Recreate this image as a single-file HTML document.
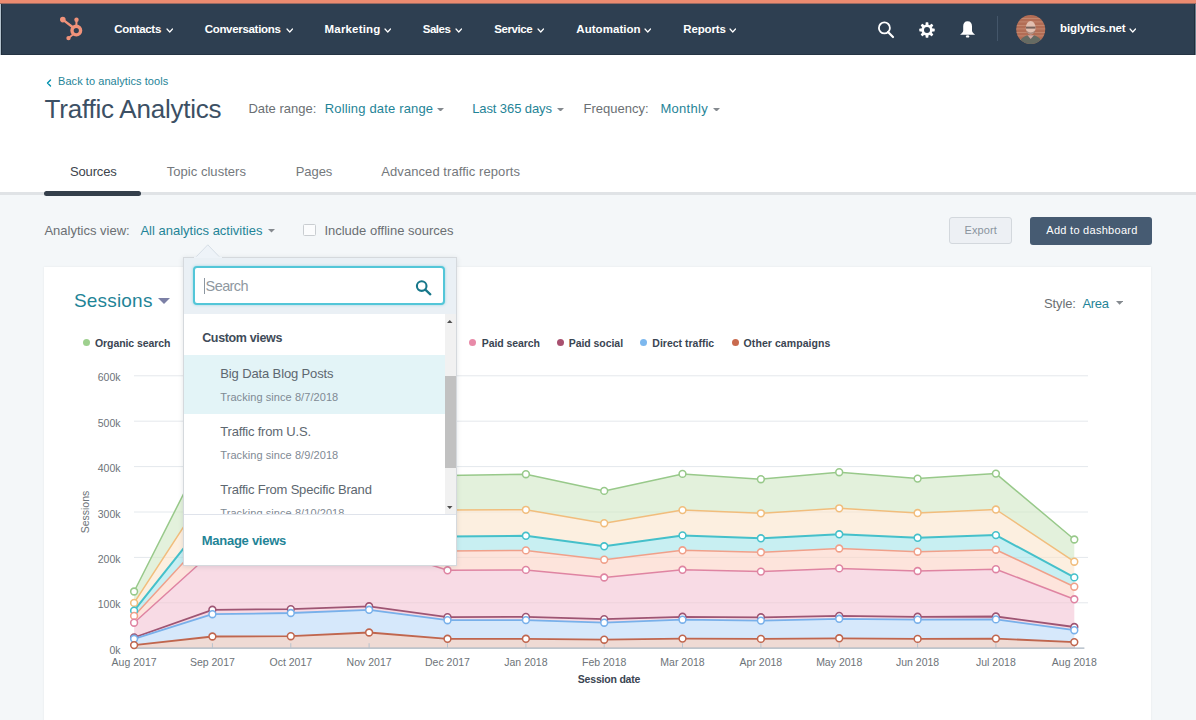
<!DOCTYPE html>
<html><head><meta charset="utf-8"><style>
html,body{margin:0;padding:0;width:1196px;height:720px;overflow:hidden;background:#fff;font-family:"Liberation Sans", sans-serif;}
.t{position:absolute;white-space:nowrap;}
</style></head><body>
<div class="t" style="left:0px;top:0px;width:1196px;height:3px;background:#ec8b70"></div>
<div class="t" style="left:0px;top:3px;width:1196px;height:1px;background:#9c6a62"></div>
<div class="t" style="left:0px;top:4px;width:1196px;height:50px;background:#2e3f51"></div>
<div class="t" style="left:0px;top:54px;width:1196px;height:1px;background:#253444"></div>
<div class="t" style="left:0px;top:4px;width:1px;height:51px;background:#b4c2cd"></div>
<div class="t" style="left:1px;top:4px;width:1px;height:51px;background:#1f2d3b"></div>
<div class="t" style="left:1195px;top:4px;width:1px;height:51px;background:#6f808e"></div>
<div class="t" style="left:1194px;top:4px;width:1px;height:51px;background:#1f2d3b"></div>
<svg class="t" style="left:55px;top:12px" width="35" height="33" viewBox="0 0 35 33">
<g stroke="#f0927a" stroke-linecap="round" fill="none">
<line x1="7.8" y1="7.6" x2="17.5" y2="15" stroke-width="2.4"/><line x1="21.5" y1="7.6" x2="21.4" y2="13" stroke-width="2"/><line x1="18" y1="22.5" x2="13.5" y2="26.1" stroke-width="1.8"/>
<circle cx="21.3" cy="18.6" r="4.3" stroke-width="3.4"/></g>
<circle cx="7.8" cy="7.6" r="2.8" fill="#f0927a"/><circle cx="21.5" cy="7.8" r="2.2" fill="#f0927a"/><circle cx="13.5" cy="26.1" r="2.2" fill="#f0927a"/>
</svg>
<div class="t" style="left:114.2px;top:23.67px;font-size:11.5px;line-height:11.5px;color:#fff;font-weight:bold;letter-spacing:-0.3px">Contacts</div>
<svg class="t" style="left:165.7px;top:27.5px" width="7.5" height="5" viewBox="0 0 7.5 5"><polyline points="1,1 3.75,4 6.5,1" fill="none" stroke="#fff" stroke-width="1.2" stroke-linecap="round" stroke-linejoin="round"/></svg>
<div class="t" style="left:204.7px;top:23.67px;font-size:11.5px;line-height:11.5px;color:#fff;font-weight:bold;letter-spacing:-0.31px">Conversations</div>
<svg class="t" style="left:285.6px;top:27.5px" width="7.5" height="5" viewBox="0 0 7.5 5"><polyline points="1,1 3.75,4 6.5,1" fill="none" stroke="#fff" stroke-width="1.2" stroke-linecap="round" stroke-linejoin="round"/></svg>
<div class="t" style="left:324.6px;top:23.67px;font-size:11.5px;line-height:11.5px;color:#fff;font-weight:bold;letter-spacing:0.16px">Marketing</div>
<svg class="t" style="left:383.8px;top:27.5px" width="7.5" height="5" viewBox="0 0 7.5 5"><polyline points="1,1 3.75,4 6.5,1" fill="none" stroke="#fff" stroke-width="1.2" stroke-linecap="round" stroke-linejoin="round"/></svg>
<div class="t" style="left:422.7px;top:23.67px;font-size:11.5px;line-height:11.5px;color:#fff;font-weight:bold;letter-spacing:-0.47px">Sales</div>
<svg class="t" style="left:455.4px;top:27.5px" width="7.5" height="5" viewBox="0 0 7.5 5"><polyline points="1,1 3.75,4 6.5,1" fill="none" stroke="#fff" stroke-width="1.2" stroke-linecap="round" stroke-linejoin="round"/></svg>
<div class="t" style="left:494.3px;top:23.67px;font-size:11.5px;line-height:11.5px;color:#fff;font-weight:bold;letter-spacing:-0.42px">Service</div>
<svg class="t" style="left:537.4px;top:27.5px" width="7.5" height="5" viewBox="0 0 7.5 5"><polyline points="1,1 3.75,4 6.5,1" fill="none" stroke="#fff" stroke-width="1.2" stroke-linecap="round" stroke-linejoin="round"/></svg>
<div class="t" style="left:576.3px;top:23.67px;font-size:11.5px;line-height:11.5px;color:#fff;font-weight:bold;letter-spacing:0.05px">Automation</div>
<svg class="t" style="left:644.4px;top:27.5px" width="7.5" height="5" viewBox="0 0 7.5 5"><polyline points="1,1 3.75,4 6.5,1" fill="none" stroke="#fff" stroke-width="1.2" stroke-linecap="round" stroke-linejoin="round"/></svg>
<div class="t" style="left:683.3px;top:23.67px;font-size:11.5px;line-height:11.5px;color:#fff;font-weight:bold;letter-spacing:-0.15px">Reports</div>
<svg class="t" style="left:729px;top:27.5px" width="7.5" height="5" viewBox="0 0 7.5 5"><polyline points="1,1 3.75,4 6.5,1" fill="none" stroke="#fff" stroke-width="1.2" stroke-linecap="round" stroke-linejoin="round"/></svg>
<svg class="t" style="left:876px;top:20px" width="20" height="20" viewBox="0 0 20 20"><circle cx="8.4" cy="7.9" r="5.5" fill="none" stroke="#fff" stroke-width="1.8"/><line x1="12" y1="12" x2="17" y2="17" stroke="#fff" stroke-width="2.2" stroke-linecap="round"/></svg>
<svg class="t" style="left:916.8px;top:19.5px" width="20" height="20" viewBox="-10 -10 20 20"><g fill="#fff"><rect x="-1.4" y="-7.7" width="2.8" height="4" rx="0.6" transform="rotate(0)"/><rect x="-1.4" y="-7.7" width="2.8" height="4" rx="0.6" transform="rotate(45)"/><rect x="-1.4" y="-7.7" width="2.8" height="4" rx="0.6" transform="rotate(90)"/><rect x="-1.4" y="-7.7" width="2.8" height="4" rx="0.6" transform="rotate(135)"/><rect x="-1.4" y="-7.7" width="2.8" height="4" rx="0.6" transform="rotate(180)"/><rect x="-1.4" y="-7.7" width="2.8" height="4" rx="0.6" transform="rotate(225)"/><rect x="-1.4" y="-7.7" width="2.8" height="4" rx="0.6" transform="rotate(270)"/><rect x="-1.4" y="-7.7" width="2.8" height="4" rx="0.6" transform="rotate(315)"/><circle r="5.6"/></g><circle r="3" fill="#2e3f51"/></svg>
<svg class="t" style="left:959px;top:20px" width="17" height="20" viewBox="0 0 17 20"><path d="M8.6 1.3 C5.6 1.3 4.2 3.3 4.2 6.3 L4.2 10.8 C4.2 12.4 2.6 13.3 1.1 14.8 L16.1 14.8 C14.6 13.3 13 12.4 13 10.8 L13 6.3 C13 3.3 11.6 1.3 8.6 1.3 Z" fill="#fff"/><ellipse cx="8.6" cy="16.4" rx="1.7" ry="1.2" fill="#fff"/></svg>
<div class="t" style="left:997px;top:16px;width:1px;height:25px;background:#44566a"></div>
<svg class="t" style="left:1016px;top:14.5px" width="30" height="30" viewBox="0 0 30 30"><defs><clipPath id="av"><circle cx="14.7" cy="14.5" r="14.5"/></clipPath></defs>
<g clip-path="url(#av)"><rect width="30" height="30" fill="#b26d55"/><rect x="0" y="3" width="30" height="0.8" fill="#d09a80" opacity="0.7"/><rect x="0" y="6.5" width="30" height="0.8" fill="#d09a80" opacity="0.7"/><rect x="0" y="10" width="30" height="0.8" fill="#d09a80" opacity="0.7"/><rect x="0" y="13.5" width="30" height="0.8" fill="#d09a80" opacity="0.7"/><rect x="0" y="17" width="30" height="0.8" fill="#d09a80" opacity="0.7"/><rect x="0" y="20.5" width="30" height="0.8" fill="#d09a80" opacity="0.7"/><rect x="0" y="24" width="30" height="0.8" fill="#d09a80" opacity="0.7"/>
<path d="M2 30 C4 23 9 20 14.7 20 C20.5 20 25.5 23 27.5 30 Z" fill="#656b63"/><path d="M11.5 20.3 L14.7 24 L18 20.3 Z" fill="#d8a8a0"/>
<ellipse cx="14.7" cy="12.8" rx="4.9" ry="6.8" fill="#e2bfb0"/><rect x="10" y="11.6" width="9.4" height="2" fill="#4a3a38" opacity="0.7"/><path d="M10.5 15.5 Q14.7 19.5 19 15.5 L19 17.5 Q14.7 21 10.5 17.5Z" fill="#8a6a60" opacity="0.6"/></g></svg>
<div class="t" style="left:1060.0px;top:23.37px;font-size:11.5px;line-height:11.5px;color:#fff;font-weight:bold;letter-spacing:-0.12px">biglytics.net</div>
<svg class="t" style="left:1129.2px;top:27.5px" width="7.5" height="5" viewBox="0 0 7.5 5"><polyline points="1,1 3.75,4 6.5,1" fill="none" stroke="#fff" stroke-width="1.2" stroke-linecap="round" stroke-linejoin="round"/></svg>
<svg class="t" style="left:46px;top:79px" width="6" height="8" viewBox="0 0 6 8"><polyline points="4.5,1 1.5,4 4.5,7" fill="none" stroke="#0091ae" stroke-width="1.4" stroke-linecap="round" stroke-linejoin="round"/></svg>
<div class="t" style="left:58.0px;top:76.09px;font-size:11px;line-height:11px;color:#1f8497;font-weight:normal;letter-spacing:0.06px">Back to analytics tools</div>
<div class="t" style="left:44.5px;top:95.69px;font-size:26px;line-height:26px;color:#3c5064;font-weight:normal;letter-spacing:-0.22px">Traffic Analytics</div>
<div class="t" style="left:248.4px;top:102.00px;font-size:13px;line-height:13px;color:#6b6f73;font-weight:normal;">Date range:</div>
<div class="t" style="left:324.7px;top:102.00px;font-size:13px;line-height:13px;color:#1f8497;font-weight:normal;letter-spacing:0.17px">Rolling date range</div>
<svg class="t" style="left:437px;top:107.8px" width="7" height="3.6" viewBox="0 0 7 3.6"><polygon points="0,0 7,0 3.5,3.6" fill="#858a8f"/></svg>
<div class="t" style="left:472.2px;top:102.00px;font-size:13px;line-height:13px;color:#1f8497;font-weight:normal;letter-spacing:-0.1px">Last 365 days</div>
<svg class="t" style="left:557px;top:107.8px" width="7" height="3.6" viewBox="0 0 7 3.6"><polygon points="0,0 7,0 3.5,3.6" fill="#858a8f"/></svg>
<div class="t" style="left:583.5px;top:102.00px;font-size:13px;line-height:13px;color:#6b6f73;font-weight:normal;">Frequency:</div>
<div class="t" style="left:660.4px;top:102.00px;font-size:13px;line-height:13px;color:#1f8497;font-weight:normal;letter-spacing:0.3px">Monthly</div>
<svg class="t" style="left:713px;top:107.8px" width="7" height="3.6" viewBox="0 0 7 3.6"><polygon points="0,0 7,0 3.5,3.6" fill="#858a8f"/></svg>
<div class="t" style="left:70.0px;top:165.30px;font-size:13px;line-height:13px;color:#3c444c;font-weight:normal;letter-spacing:-0.15px">Sources</div>
<div class="t" style="left:166.7px;top:165.30px;font-size:13px;line-height:13px;color:#74787c;font-weight:normal;letter-spacing:0.04px">Topic clusters</div>
<div class="t" style="left:295.8px;top:165.30px;font-size:13px;line-height:13px;color:#74787c;font-weight:normal;letter-spacing:-0.1px">Pages</div>
<div class="t" style="left:381.3px;top:165.30px;font-size:13px;line-height:13px;color:#74787c;font-weight:normal;letter-spacing:0.07px">Advanced traffic reports</div>
<div class="t" style="left:0px;top:194px;width:1196px;height:526px;background:#f4f7f9"></div>
<div class="t" style="left:0px;top:192px;width:1196px;height:3px;background:#e0e3e6"></div>
<div class="t" style="left:44px;top:191px;width:97px;height:5px;background:#343f4b;border-radius:2.5px"></div>
<div class="t" style="left:44.4px;top:224.20px;font-size:13px;line-height:13px;color:#6b6f73;font-weight:normal;">Analytics view:</div>
<div class="t" style="left:140.4px;top:224.20px;font-size:13px;line-height:13px;color:#1f8497;font-weight:normal;">All analytics activities</div>
<svg class="t" style="left:267.5px;top:229px" width="7" height="3.6" viewBox="0 0 7 3.6"><polygon points="0,0 7,0 3.5,3.6" fill="#858a8f"/></svg>
<div class="t" style="left:302.8px;top:223.7px;width:12.800000000000011px;height:12.800000000000011px;background:#fbfcfd;border:1px solid #c9cdd1;border-radius:1.5px;box-sizing:border-box"></div>
<div class="t" style="left:324.4px;top:224.20px;font-size:13px;line-height:13px;color:#6b6f73;font-weight:normal;">Include offline sources</div>
<div class="t" style="left:949px;top:217px;width:63px;height:27.30000000000001px;background:#edf0f4;border:1px solid #d3d8dd;border-radius:3px;box-sizing:border-box"></div>
<div class="t" style="left:964.5px;top:224.59px;font-size:11px;line-height:11px;color:#8a949e;font-weight:normal;letter-spacing:0.12px">Export</div>
<div class="t" style="left:1030px;top:216.6px;width:122px;height:28.0px;background:#465b72;border-radius:3px"></div>
<div class="t" style="left:1046.3px;top:224.59px;font-size:11px;line-height:11px;color:#fff;font-weight:normal;letter-spacing:0.28px">Add to dashboard</div>
<div class="t" style="left:44px;top:267px;width:1107px;height:473px;background:#fff;box-shadow:0 0 2px rgba(45,62,80,0.08)"></div>
<div class="t" style="left:73.9px;top:291.12px;font-size:19px;line-height:19px;color:#1f8497;font-weight:normal;letter-spacing:0.2px">Sessions</div>
<svg class="t" style="left:158px;top:298px" width="12" height="6" viewBox="0 0 12 6"><polygon points="0,0 12,0 6.0,6" fill="#7c80a6"/></svg>
<div class="t" style="left:1044.0px;top:296.50px;font-size:13px;line-height:13px;color:#6b6f73;font-weight:normal;letter-spacing:-0.12px">Style:</div>
<div class="t" style="left:1082.5px;top:296.50px;font-size:13px;line-height:13px;color:#1f8497;font-weight:normal;letter-spacing:-0.33px">Area</div>
<svg class="t" style="left:1115.5px;top:301px" width="7.2" height="3.8" viewBox="0 0 7.2 3.8"><polygon points="0,0 7.2,0 3.6,3.8" fill="#858a8f"/></svg>
<div class="t" style="left:82.8px;top:339.3px;width:7px;height:7px;border-radius:50%;background:#9ed08e"></div>
<div class="t" style="left:95.0px;top:338.11px;font-size:10.5px;line-height:10.5px;color:#3a4552;font-weight:bold;letter-spacing:-0.08px">Organic search</div>
<div class="t" style="left:469.2px;top:339.3px;width:7px;height:7px;border-radius:50%;background:#e88aa8"></div>
<div class="t" style="left:481.8px;top:338.11px;font-size:10.5px;line-height:10.5px;color:#3a4552;font-weight:bold;letter-spacing:-0.08px">Paid search</div>
<div class="t" style="left:556.9px;top:339.3px;width:7px;height:7px;border-radius:50%;background:#a8506f"></div>
<div class="t" style="left:568.7px;top:338.11px;font-size:10.5px;line-height:10.5px;color:#3a4552;font-weight:bold;letter-spacing:-0.05px">Paid social</div>
<div class="t" style="left:639.8px;top:339.3px;width:7px;height:7px;border-radius:50%;background:#7db8ee"></div>
<div class="t" style="left:652.3px;top:338.11px;font-size:10.5px;line-height:10.5px;color:#3a4552;font-weight:bold;letter-spacing:0px">Direct traffic</div>
<div class="t" style="left:731.5px;top:339.3px;width:7px;height:7px;border-radius:50%;background:#c96a4e"></div>
<div class="t" style="left:743.6px;top:338.11px;font-size:10.5px;line-height:10.5px;color:#3a4552;font-weight:bold;letter-spacing:0.07px">Other campaigns</div>
<svg class="t" style="left:0;top:0" width="1196" height="720" viewBox="0 0 1196 720">
<line x1="134" y1="602.8" x2="1088" y2="602.8" stroke="#eef1f5" stroke-width="1"/>
<line x1="134" y1="557.4" x2="1088" y2="557.4" stroke="#eef1f5" stroke-width="1"/>
<line x1="134" y1="512.0" x2="1088" y2="512.0" stroke="#eef1f5" stroke-width="1"/>
<line x1="134" y1="466.6" x2="1088" y2="466.6" stroke="#eef1f5" stroke-width="1"/>
<line x1="134" y1="421.2" x2="1088" y2="421.2" stroke="#eef1f5" stroke-width="1"/>
<line x1="134" y1="375.8" x2="1088" y2="375.8" stroke="#eef1f5" stroke-width="1"/>
<path d="M134.1,591.5 L212.4,437.0 L290.8,440.0 L369.1,435.0 L447.5,475.5 L525.9,474.2 L604.2,490.9 L682.5,473.9 L760.9,479.2 L839.2,472.2 L917.6,478.6 L995.9,473.6 L1074.3,539.5 L1074.3,561.7 L995.9,509.5 L917.6,513.0 L839.2,508.3 L760.9,513.3 L682.5,510.1 L604.2,523.2 L525.9,509.8 L447.5,510.0 L369.1,480.0 L290.8,485.0 L212.4,482.6 L134.1,602.9 Z" fill="#e3f1dc"/>
<path d="M134.1,602.9 L212.4,482.6 L290.8,485.0 L369.1,480.0 L447.5,510.0 L525.9,509.8 L604.2,523.2 L682.5,510.1 L760.9,513.3 L839.2,508.3 L917.6,513.0 L995.9,509.5 L1074.3,561.7 L1074.3,577.4 L995.9,535.1 L917.6,537.8 L839.2,534.3 L760.9,538.3 L682.5,535.4 L604.2,546.3 L525.9,535.8 L447.5,536.5 L369.1,510.0 L290.8,514.0 L212.4,512.2 L134.1,610.7 Z" fill="#fcefe0"/>
<path d="M134.1,610.7 L212.4,512.2 L290.8,514.0 L369.1,510.0 L447.5,536.5 L525.9,535.8 L604.2,546.3 L682.5,535.4 L760.9,538.3 L839.2,534.3 L917.6,537.8 L995.9,535.1 L1074.3,577.4 L1074.3,586.7 L995.9,549.7 L917.6,551.7 L839.2,548.5 L760.9,552.3 L682.5,550.3 L604.2,559.7 L525.9,550.4 L447.5,551.0 L369.1,528.0 L290.8,533.0 L212.4,531.0 L134.1,615.9 Z" fill="#c8eff2"/>
<path d="M134.1,615.9 L212.4,531.0 L290.8,533.0 L369.1,528.0 L447.5,551.0 L525.9,550.4 L604.2,559.7 L682.5,550.3 L760.9,552.3 L839.2,548.5 L917.6,551.7 L995.9,549.7 L1074.3,586.7 L1074.3,599.3 L995.9,569.2 L917.6,571.0 L839.2,568.4 L760.9,571.6 L682.5,569.8 L604.2,577.5 L525.9,569.9 L447.5,570.3 L369.1,545.0 L290.8,550.0 L212.4,552.0 L134.1,622.7 Z" fill="#fde4dc"/>
<path d="M134.1,622.7 L212.4,552.0 L290.8,550.0 L369.1,545.0 L447.5,570.3 L525.9,569.9 L604.2,577.5 L682.5,569.8 L760.9,571.6 L839.2,568.4 L917.6,571.0 L995.9,569.2 L1074.3,599.3 L1074.3,627.0 L995.9,616.5 L917.6,616.8 L839.2,615.9 L760.9,617.3 L682.5,616.8 L604.2,619.2 L525.9,616.9 L447.5,617.1 L369.1,606.3 L290.8,609.1 L212.4,609.8 L134.1,637.5 Z" fill="#f8dbe5"/>
<path d="M134.1,637.5 L212.4,609.8 L290.8,609.1 L369.1,606.3 L447.5,617.1 L525.9,616.9 L604.2,619.2 L682.5,616.8 L760.9,617.3 L839.2,615.9 L917.6,616.8 L995.9,616.5 L1074.3,627.0 L1074.3,630.2 L995.9,619.4 L917.6,619.7 L839.2,618.8 L760.9,620.6 L682.5,619.7 L604.2,622.7 L525.9,620.1 L447.5,620.2 L369.1,609.8 L290.8,613.0 L212.4,614.2 L134.1,638.8 Z" fill="#f8dbe5"/>
<path d="M134.1,638.8 L212.4,614.2 L290.8,613.0 L369.1,609.8 L447.5,620.2 L525.9,620.1 L604.2,622.7 L682.5,619.7 L760.9,620.6 L839.2,618.8 L917.6,619.7 L995.9,619.4 L1074.3,630.2 L1074.3,642.1 L995.9,638.6 L917.6,638.9 L839.2,638.3 L760.9,638.9 L682.5,638.6 L604.2,639.7 L525.9,638.8 L447.5,638.8 L369.1,632.5 L290.8,636.2 L212.4,636.5 L134.1,645.1 Z" fill="#d6e8fb"/>
<path d="M134.1,645.1 L212.4,636.5 L290.8,636.2 L369.1,632.5 L447.5,638.8 L525.9,638.8 L604.2,639.7 L682.5,638.6 L760.9,638.9 L839.2,638.3 L917.6,638.9 L995.9,638.6 L1074.3,642.1 L1074.3,648.2 L995.9,648.2 L917.6,648.2 L839.2,648.2 L760.9,648.2 L682.5,648.2 L604.2,648.2 L525.9,648.2 L447.5,648.2 L369.1,648.2 L290.8,648.2 L212.4,648.2 L134.1,648.2 Z" fill="#efdad4"/>
<line x1="134" y1="602.8" x2="1088" y2="602.8" stroke="rgba(60,70,80,0.05)" stroke-width="1"/>
<line x1="134" y1="557.4" x2="1088" y2="557.4" stroke="rgba(60,70,80,0.05)" stroke-width="1"/>
<line x1="134" y1="512.0" x2="1088" y2="512.0" stroke="rgba(60,70,80,0.05)" stroke-width="1"/>
<line x1="134" y1="466.6" x2="1088" y2="466.6" stroke="rgba(60,70,80,0.05)" stroke-width="1"/>
<line x1="134" y1="421.2" x2="1088" y2="421.2" stroke="rgba(60,70,80,0.05)" stroke-width="1"/>
<line x1="134" y1="375.8" x2="1088" y2="375.8" stroke="rgba(60,70,80,0.05)" stroke-width="1"/>
<line x1="134" y1="648.2" x2="1084.4" y2="648.2" stroke="#a8b4c0" stroke-width="1.2"/>
<line x1="134.1" y1="643.2" x2="134.1" y2="648.2" stroke="#b8c2cc" stroke-width="1"/>
<line x1="212.4" y1="643.2" x2="212.4" y2="648.2" stroke="#b8c2cc" stroke-width="1"/>
<line x1="290.8" y1="643.2" x2="290.8" y2="648.2" stroke="#b8c2cc" stroke-width="1"/>
<line x1="369.1" y1="643.2" x2="369.1" y2="648.2" stroke="#b8c2cc" stroke-width="1"/>
<line x1="447.5" y1="643.2" x2="447.5" y2="648.2" stroke="#b8c2cc" stroke-width="1"/>
<line x1="525.9" y1="643.2" x2="525.9" y2="648.2" stroke="#b8c2cc" stroke-width="1"/>
<line x1="604.2" y1="643.2" x2="604.2" y2="648.2" stroke="#b8c2cc" stroke-width="1"/>
<line x1="682.5" y1="643.2" x2="682.5" y2="648.2" stroke="#b8c2cc" stroke-width="1"/>
<line x1="760.9" y1="643.2" x2="760.9" y2="648.2" stroke="#b8c2cc" stroke-width="1"/>
<line x1="839.2" y1="643.2" x2="839.2" y2="648.2" stroke="#b8c2cc" stroke-width="1"/>
<line x1="917.6" y1="643.2" x2="917.6" y2="648.2" stroke="#b8c2cc" stroke-width="1"/>
<line x1="995.9" y1="643.2" x2="995.9" y2="648.2" stroke="#b8c2cc" stroke-width="1"/>
<line x1="1074.3" y1="643.2" x2="1074.3" y2="648.2" stroke="#b8c2cc" stroke-width="1"/>
<polyline points="134.1,591.5 212.4,437.0 290.8,440.0 369.1,435.0 447.5,475.5 525.9,474.2 604.2,490.9 682.5,473.9 760.9,479.2 839.2,472.2 917.6,478.6 995.9,473.6 1074.3,539.5" fill="none" stroke="#98c98a" stroke-width="1.5" stroke-linejoin="round"/>
<polyline points="134.1,602.9 212.4,482.6 290.8,485.0 369.1,480.0 447.5,510.0 525.9,509.8 604.2,523.2 682.5,510.1 760.9,513.3 839.2,508.3 917.6,513.0 995.9,509.5 1074.3,561.7" fill="none" stroke="#f1bd7c" stroke-width="1.5" stroke-linejoin="round"/>
<polyline points="134.1,610.7 212.4,512.2 290.8,514.0 369.1,510.0 447.5,536.5 525.9,535.8 604.2,546.3 682.5,535.4 760.9,538.3 839.2,534.3 917.6,537.8 995.9,535.1 1074.3,577.4" fill="none" stroke="#45c0ca" stroke-width="2.0" stroke-linejoin="round"/>
<polyline points="134.1,615.9 212.4,531.0 290.8,533.0 369.1,528.0 447.5,551.0 525.9,550.4 604.2,559.7 682.5,550.3 760.9,552.3 839.2,548.5 917.6,551.7 995.9,549.7 1074.3,586.7" fill="none" stroke="#f0a08a" stroke-width="1.5" stroke-linejoin="round"/>
<polyline points="134.1,622.7 212.4,552.0 290.8,550.0 369.1,545.0 447.5,570.3 525.9,569.9 604.2,577.5 682.5,569.8 760.9,571.6 839.2,568.4 917.6,571.0 995.9,569.2 1074.3,599.3" fill="none" stroke="#df84a2" stroke-width="1.5" stroke-linejoin="round"/>
<polyline points="134.1,637.5 212.4,609.8 290.8,609.1 369.1,606.3 447.5,617.1 525.9,616.9 604.2,619.2 682.5,616.8 760.9,617.3 839.2,615.9 917.6,616.8 995.9,616.5 1074.3,627.0" fill="none" stroke="#9e5573" stroke-width="1.8" stroke-linejoin="round"/>
<polyline points="134.1,638.8 212.4,614.2 290.8,613.0 369.1,609.8 447.5,620.2 525.9,620.1 604.2,622.7 682.5,619.7 760.9,620.6 839.2,618.8 917.6,619.7 995.9,619.4 1074.3,630.2" fill="none" stroke="#78b0ea" stroke-width="1.8" stroke-linejoin="round"/>
<polyline points="134.1,645.1 212.4,636.5 290.8,636.2 369.1,632.5 447.5,638.8 525.9,638.8 604.2,639.7 682.5,638.6 760.9,638.9 839.2,638.3 917.6,638.9 995.9,638.6 1074.3,642.1" fill="none" stroke="#c0664e" stroke-width="1.8" stroke-linejoin="round"/>
<circle cx="134.1" cy="591.5" r="3.4" fill="#fff" stroke="#98c98a" stroke-width="1.55"/>
<circle cx="212.4" cy="437.0" r="3.4" fill="#fff" stroke="#98c98a" stroke-width="1.55"/>
<circle cx="290.8" cy="440.0" r="3.4" fill="#fff" stroke="#98c98a" stroke-width="1.55"/>
<circle cx="369.1" cy="435.0" r="3.4" fill="#fff" stroke="#98c98a" stroke-width="1.55"/>
<circle cx="447.5" cy="475.5" r="3.4" fill="#fff" stroke="#98c98a" stroke-width="1.55"/>
<circle cx="525.9" cy="474.2" r="3.4" fill="#fff" stroke="#98c98a" stroke-width="1.55"/>
<circle cx="604.2" cy="490.9" r="3.4" fill="#fff" stroke="#98c98a" stroke-width="1.55"/>
<circle cx="682.5" cy="473.9" r="3.4" fill="#fff" stroke="#98c98a" stroke-width="1.55"/>
<circle cx="760.9" cy="479.2" r="3.4" fill="#fff" stroke="#98c98a" stroke-width="1.55"/>
<circle cx="839.2" cy="472.2" r="3.4" fill="#fff" stroke="#98c98a" stroke-width="1.55"/>
<circle cx="917.6" cy="478.6" r="3.4" fill="#fff" stroke="#98c98a" stroke-width="1.55"/>
<circle cx="995.9" cy="473.6" r="3.4" fill="#fff" stroke="#98c98a" stroke-width="1.55"/>
<circle cx="1074.3" cy="539.5" r="3.4" fill="#fff" stroke="#98c98a" stroke-width="1.55"/>
<circle cx="134.1" cy="602.9" r="3.4" fill="#fff" stroke="#f1bd7c" stroke-width="1.55"/>
<circle cx="212.4" cy="482.6" r="3.4" fill="#fff" stroke="#f1bd7c" stroke-width="1.55"/>
<circle cx="290.8" cy="485.0" r="3.4" fill="#fff" stroke="#f1bd7c" stroke-width="1.55"/>
<circle cx="369.1" cy="480.0" r="3.4" fill="#fff" stroke="#f1bd7c" stroke-width="1.55"/>
<circle cx="447.5" cy="510.0" r="3.4" fill="#fff" stroke="#f1bd7c" stroke-width="1.55"/>
<circle cx="525.9" cy="509.8" r="3.4" fill="#fff" stroke="#f1bd7c" stroke-width="1.55"/>
<circle cx="604.2" cy="523.2" r="3.4" fill="#fff" stroke="#f1bd7c" stroke-width="1.55"/>
<circle cx="682.5" cy="510.1" r="3.4" fill="#fff" stroke="#f1bd7c" stroke-width="1.55"/>
<circle cx="760.9" cy="513.3" r="3.4" fill="#fff" stroke="#f1bd7c" stroke-width="1.55"/>
<circle cx="839.2" cy="508.3" r="3.4" fill="#fff" stroke="#f1bd7c" stroke-width="1.55"/>
<circle cx="917.6" cy="513.0" r="3.4" fill="#fff" stroke="#f1bd7c" stroke-width="1.55"/>
<circle cx="995.9" cy="509.5" r="3.4" fill="#fff" stroke="#f1bd7c" stroke-width="1.55"/>
<circle cx="1074.3" cy="561.7" r="3.4" fill="#fff" stroke="#f1bd7c" stroke-width="1.55"/>
<circle cx="134.1" cy="610.7" r="3.4" fill="#fff" stroke="#45c0ca" stroke-width="1.55"/>
<circle cx="212.4" cy="512.2" r="3.4" fill="#fff" stroke="#45c0ca" stroke-width="1.55"/>
<circle cx="290.8" cy="514.0" r="3.4" fill="#fff" stroke="#45c0ca" stroke-width="1.55"/>
<circle cx="369.1" cy="510.0" r="3.4" fill="#fff" stroke="#45c0ca" stroke-width="1.55"/>
<circle cx="447.5" cy="536.5" r="3.4" fill="#fff" stroke="#45c0ca" stroke-width="1.55"/>
<circle cx="525.9" cy="535.8" r="3.4" fill="#fff" stroke="#45c0ca" stroke-width="1.55"/>
<circle cx="604.2" cy="546.3" r="3.4" fill="#fff" stroke="#45c0ca" stroke-width="1.55"/>
<circle cx="682.5" cy="535.4" r="3.4" fill="#fff" stroke="#45c0ca" stroke-width="1.55"/>
<circle cx="760.9" cy="538.3" r="3.4" fill="#fff" stroke="#45c0ca" stroke-width="1.55"/>
<circle cx="839.2" cy="534.3" r="3.4" fill="#fff" stroke="#45c0ca" stroke-width="1.55"/>
<circle cx="917.6" cy="537.8" r="3.4" fill="#fff" stroke="#45c0ca" stroke-width="1.55"/>
<circle cx="995.9" cy="535.1" r="3.4" fill="#fff" stroke="#45c0ca" stroke-width="1.55"/>
<circle cx="1074.3" cy="577.4" r="3.4" fill="#fff" stroke="#45c0ca" stroke-width="1.55"/>
<circle cx="134.1" cy="615.9" r="3.4" fill="#fff" stroke="#f0a08a" stroke-width="1.55"/>
<circle cx="212.4" cy="531.0" r="3.4" fill="#fff" stroke="#f0a08a" stroke-width="1.55"/>
<circle cx="290.8" cy="533.0" r="3.4" fill="#fff" stroke="#f0a08a" stroke-width="1.55"/>
<circle cx="369.1" cy="528.0" r="3.4" fill="#fff" stroke="#f0a08a" stroke-width="1.55"/>
<circle cx="447.5" cy="551.0" r="3.4" fill="#fff" stroke="#f0a08a" stroke-width="1.55"/>
<circle cx="525.9" cy="550.4" r="3.4" fill="#fff" stroke="#f0a08a" stroke-width="1.55"/>
<circle cx="604.2" cy="559.7" r="3.4" fill="#fff" stroke="#f0a08a" stroke-width="1.55"/>
<circle cx="682.5" cy="550.3" r="3.4" fill="#fff" stroke="#f0a08a" stroke-width="1.55"/>
<circle cx="760.9" cy="552.3" r="3.4" fill="#fff" stroke="#f0a08a" stroke-width="1.55"/>
<circle cx="839.2" cy="548.5" r="3.4" fill="#fff" stroke="#f0a08a" stroke-width="1.55"/>
<circle cx="917.6" cy="551.7" r="3.4" fill="#fff" stroke="#f0a08a" stroke-width="1.55"/>
<circle cx="995.9" cy="549.7" r="3.4" fill="#fff" stroke="#f0a08a" stroke-width="1.55"/>
<circle cx="1074.3" cy="586.7" r="3.4" fill="#fff" stroke="#f0a08a" stroke-width="1.55"/>
<circle cx="134.1" cy="622.7" r="3.4" fill="#fff" stroke="#df84a2" stroke-width="1.55"/>
<circle cx="212.4" cy="552.0" r="3.4" fill="#fff" stroke="#df84a2" stroke-width="1.55"/>
<circle cx="290.8" cy="550.0" r="3.4" fill="#fff" stroke="#df84a2" stroke-width="1.55"/>
<circle cx="369.1" cy="545.0" r="3.4" fill="#fff" stroke="#df84a2" stroke-width="1.55"/>
<circle cx="447.5" cy="570.3" r="3.4" fill="#fff" stroke="#df84a2" stroke-width="1.55"/>
<circle cx="525.9" cy="569.9" r="3.4" fill="#fff" stroke="#df84a2" stroke-width="1.55"/>
<circle cx="604.2" cy="577.5" r="3.4" fill="#fff" stroke="#df84a2" stroke-width="1.55"/>
<circle cx="682.5" cy="569.8" r="3.4" fill="#fff" stroke="#df84a2" stroke-width="1.55"/>
<circle cx="760.9" cy="571.6" r="3.4" fill="#fff" stroke="#df84a2" stroke-width="1.55"/>
<circle cx="839.2" cy="568.4" r="3.4" fill="#fff" stroke="#df84a2" stroke-width="1.55"/>
<circle cx="917.6" cy="571.0" r="3.4" fill="#fff" stroke="#df84a2" stroke-width="1.55"/>
<circle cx="995.9" cy="569.2" r="3.4" fill="#fff" stroke="#df84a2" stroke-width="1.55"/>
<circle cx="1074.3" cy="599.3" r="3.4" fill="#fff" stroke="#df84a2" stroke-width="1.55"/>
<circle cx="134.1" cy="637.5" r="3.4" fill="#fff" stroke="#9e5573" stroke-width="1.55"/>
<circle cx="212.4" cy="609.8" r="3.4" fill="#fff" stroke="#9e5573" stroke-width="1.55"/>
<circle cx="290.8" cy="609.1" r="3.4" fill="#fff" stroke="#9e5573" stroke-width="1.55"/>
<circle cx="369.1" cy="606.3" r="3.4" fill="#fff" stroke="#9e5573" stroke-width="1.55"/>
<circle cx="447.5" cy="617.1" r="3.4" fill="#fff" stroke="#9e5573" stroke-width="1.55"/>
<circle cx="525.9" cy="616.9" r="3.4" fill="#fff" stroke="#9e5573" stroke-width="1.55"/>
<circle cx="604.2" cy="619.2" r="3.4" fill="#fff" stroke="#9e5573" stroke-width="1.55"/>
<circle cx="682.5" cy="616.8" r="3.4" fill="#fff" stroke="#9e5573" stroke-width="1.55"/>
<circle cx="760.9" cy="617.3" r="3.4" fill="#fff" stroke="#9e5573" stroke-width="1.55"/>
<circle cx="839.2" cy="615.9" r="3.4" fill="#fff" stroke="#9e5573" stroke-width="1.55"/>
<circle cx="917.6" cy="616.8" r="3.4" fill="#fff" stroke="#9e5573" stroke-width="1.55"/>
<circle cx="995.9" cy="616.5" r="3.4" fill="#fff" stroke="#9e5573" stroke-width="1.55"/>
<circle cx="1074.3" cy="627.0" r="3.4" fill="#fff" stroke="#9e5573" stroke-width="1.55"/>
<circle cx="134.1" cy="638.8" r="3.4" fill="#fff" stroke="#78b0ea" stroke-width="1.55"/>
<circle cx="212.4" cy="614.2" r="3.4" fill="#fff" stroke="#78b0ea" stroke-width="1.55"/>
<circle cx="290.8" cy="613.0" r="3.4" fill="#fff" stroke="#78b0ea" stroke-width="1.55"/>
<circle cx="369.1" cy="609.8" r="3.4" fill="#fff" stroke="#78b0ea" stroke-width="1.55"/>
<circle cx="447.5" cy="620.2" r="3.4" fill="#fff" stroke="#78b0ea" stroke-width="1.55"/>
<circle cx="525.9" cy="620.1" r="3.4" fill="#fff" stroke="#78b0ea" stroke-width="1.55"/>
<circle cx="604.2" cy="622.7" r="3.4" fill="#fff" stroke="#78b0ea" stroke-width="1.55"/>
<circle cx="682.5" cy="619.7" r="3.4" fill="#fff" stroke="#78b0ea" stroke-width="1.55"/>
<circle cx="760.9" cy="620.6" r="3.4" fill="#fff" stroke="#78b0ea" stroke-width="1.55"/>
<circle cx="839.2" cy="618.8" r="3.4" fill="#fff" stroke="#78b0ea" stroke-width="1.55"/>
<circle cx="917.6" cy="619.7" r="3.4" fill="#fff" stroke="#78b0ea" stroke-width="1.55"/>
<circle cx="995.9" cy="619.4" r="3.4" fill="#fff" stroke="#78b0ea" stroke-width="1.55"/>
<circle cx="1074.3" cy="630.2" r="3.4" fill="#fff" stroke="#78b0ea" stroke-width="1.55"/>
<circle cx="134.1" cy="645.1" r="3.4" fill="#fff" stroke="#c0664e" stroke-width="1.55"/>
<circle cx="212.4" cy="636.5" r="3.4" fill="#fff" stroke="#c0664e" stroke-width="1.55"/>
<circle cx="290.8" cy="636.2" r="3.4" fill="#fff" stroke="#c0664e" stroke-width="1.55"/>
<circle cx="369.1" cy="632.5" r="3.4" fill="#fff" stroke="#c0664e" stroke-width="1.55"/>
<circle cx="447.5" cy="638.8" r="3.4" fill="#fff" stroke="#c0664e" stroke-width="1.55"/>
<circle cx="525.9" cy="638.8" r="3.4" fill="#fff" stroke="#c0664e" stroke-width="1.55"/>
<circle cx="604.2" cy="639.7" r="3.4" fill="#fff" stroke="#c0664e" stroke-width="1.55"/>
<circle cx="682.5" cy="638.6" r="3.4" fill="#fff" stroke="#c0664e" stroke-width="1.55"/>
<circle cx="760.9" cy="638.9" r="3.4" fill="#fff" stroke="#c0664e" stroke-width="1.55"/>
<circle cx="839.2" cy="638.3" r="3.4" fill="#fff" stroke="#c0664e" stroke-width="1.55"/>
<circle cx="917.6" cy="638.9" r="3.4" fill="#fff" stroke="#c0664e" stroke-width="1.55"/>
<circle cx="995.9" cy="638.6" r="3.4" fill="#fff" stroke="#c0664e" stroke-width="1.55"/>
<circle cx="1074.3" cy="642.1" r="3.4" fill="#fff" stroke="#c0664e" stroke-width="1.55"/>
</svg>
<div class="t" style="left:60px;top:643.7px;width:60.5px;text-align:right;font-size:10.5px;line-height:12px;color:#6d7378">0k</div>
<div class="t" style="left:60px;top:598.3px;width:60.5px;text-align:right;font-size:10.5px;line-height:12px;color:#6d7378">100k</div>
<div class="t" style="left:60px;top:552.9px;width:60.5px;text-align:right;font-size:10.5px;line-height:12px;color:#6d7378">200k</div>
<div class="t" style="left:60px;top:507.5px;width:60.5px;text-align:right;font-size:10.5px;line-height:12px;color:#6d7378">300k</div>
<div class="t" style="left:60px;top:462.1px;width:60.5px;text-align:right;font-size:10.5px;line-height:12px;color:#6d7378">400k</div>
<div class="t" style="left:60px;top:416.7px;width:60.5px;text-align:right;font-size:10.5px;line-height:12px;color:#6d7378">500k</div>
<div class="t" style="left:60px;top:371.3px;width:60.5px;text-align:right;font-size:10.5px;line-height:12px;color:#6d7378">600k</div>
<div class="t" style="left:94.1px;top:655.7px;width:80px;text-align:center;font-size:10.5px;line-height:12px;color:#6d7378">Aug 2017</div>
<div class="t" style="left:172.4px;top:655.7px;width:80px;text-align:center;font-size:10.5px;line-height:12px;color:#6d7378">Sep 2017</div>
<div class="t" style="left:250.8px;top:655.7px;width:80px;text-align:center;font-size:10.5px;line-height:12px;color:#6d7378">Oct 2017</div>
<div class="t" style="left:329.1px;top:655.7px;width:80px;text-align:center;font-size:10.5px;line-height:12px;color:#6d7378">Nov 2017</div>
<div class="t" style="left:407.5px;top:655.7px;width:80px;text-align:center;font-size:10.5px;line-height:12px;color:#6d7378">Dec 2017</div>
<div class="t" style="left:485.9px;top:655.7px;width:80px;text-align:center;font-size:10.5px;line-height:12px;color:#6d7378">Jan 2018</div>
<div class="t" style="left:564.2px;top:655.7px;width:80px;text-align:center;font-size:10.5px;line-height:12px;color:#6d7378">Feb 2018</div>
<div class="t" style="left:642.5px;top:655.7px;width:80px;text-align:center;font-size:10.5px;line-height:12px;color:#6d7378">Mar 2018</div>
<div class="t" style="left:720.9px;top:655.7px;width:80px;text-align:center;font-size:10.5px;line-height:12px;color:#6d7378">Apr 2018</div>
<div class="t" style="left:799.2px;top:655.7px;width:80px;text-align:center;font-size:10.5px;line-height:12px;color:#6d7378">May 2018</div>
<div class="t" style="left:877.6px;top:655.7px;width:80px;text-align:center;font-size:10.5px;line-height:12px;color:#6d7378">Jun 2018</div>
<div class="t" style="left:955.9px;top:655.7px;width:80px;text-align:center;font-size:10.5px;line-height:12px;color:#6d7378">Jul 2018</div>
<div class="t" style="left:1034.3px;top:655.7px;width:80px;text-align:center;font-size:10.5px;line-height:12px;color:#6d7378">Aug 2018</div>
<div class="t" style="left:45.4px;top:506px;width:80px;text-align:center;font-size:10.5px;line-height:12px;color:#6d7378;transform:rotate(-90deg)">Sessions</div>
<div class="t" style="left:549px;top:673px;width:120px;text-align:center;font-size:10.5px;line-height:12px;color:#3a4552;font-weight:bold;letter-spacing:-0.2px">Session date</div>
<div class="t" style="left:182.75px;top:256.5px;width:273.75px;height:309.5px;background:#fff;border:1px solid #d5d9dd;box-sizing:border-box;box-shadow:0 1px 5px rgba(45,62,80,0.13)"></div>
<svg class="t" style="left:194px;top:243px" width="28" height="15" viewBox="0 0 28 15"><polygon points="1.5,14.5 13.8,1.8 26,14.5" fill="#eef3f8" stroke="#d6dee6" stroke-width="1"/><rect x="0" y="13.6" width="28" height="2" fill="#eef3f8"/></svg>
<div class="t" style="left:183.75px;top:257.5px;width:271.75px;height:56.0px;background:#eaf0f5"></div>
<div class="t" style="left:193.1px;top:266.25px;width:252.4px;height:38.75px;background:#fff;border:2px solid #53c6d8;border-radius:4px;box-sizing:border-box;box-shadow:0 0 3px rgba(0,164,189,0.35)"></div>
<div class="t" style="left:205.6px;top:278.98px;font-size:14.5px;line-height:14.5px;color:#8f989f;font-weight:normal;letter-spacing:-0.6px">Search</div>
<div class="t" style="left:204px;top:277.5px;width:1px;height:16.5px;background:#8d97a1"></div>
<svg class="t" style="left:414px;top:278px" width="20" height="20" viewBox="0 0 20 20"><circle cx="7.7" cy="8.1" r="4.8" fill="none" stroke="#17778a" stroke-width="2.1"/><line x1="11.3" y1="11.7" x2="16.3" y2="16.3" stroke="#17778a" stroke-width="2.3" stroke-linecap="round"/></svg>
<div class="t" style="left:444.5px;top:313.5px;width:11.0px;height:200.89999999999998px;background:#f1f1f1"></div>
<div class="t" style="left:444.5px;top:375.6px;width:11.0px;height:92.59999999999997px;background:#c1c1c1"></div>
<svg class="t" style="left:447.3px;top:320.3px" width="5.5" height="3" viewBox="0 0 5.5 3"><polygon points="0,3 5.5,3 2.75,0" fill="#505050"/></svg>
<svg class="t" style="left:447.3px;top:505.5px" width="5.5" height="3" viewBox="0 0 5.5 3"><polygon points="0,0 5.5,0 2.75,3" fill="#505050"/></svg>
<div class="t" style="left:202.2px;top:332.32px;font-size:12.5px;line-height:12.5px;color:#3f4c59;font-weight:bold;letter-spacing:-0.35px">Custom views</div>
<div class="t" style="left:183.75px;top:355.4px;width:260.75px;height:58.200000000000045px;background:#e3f4f7"></div>
<div class="t" style="left:220.3px;top:367.00px;font-size:13px;line-height:13px;color:#5d6770;font-weight:normal;letter-spacing:-0.13px">Big Data Blog Posts</div>
<div class="t" style="left:220.3px;top:391.69px;font-size:11px;line-height:11px;color:#7f8a94;font-weight:normal;letter-spacing:0.07px">Tracking since 8/7/2018</div>
<div class="t" style="left:220.3px;top:425.20px;font-size:13px;line-height:13px;color:#5d6770;font-weight:normal;letter-spacing:-0.2px">Traffic from U.S.</div>
<div class="t" style="left:220.3px;top:449.79px;font-size:11px;line-height:11px;color:#7f8a94;font-weight:normal;letter-spacing:0.07px">Tracking since 8/9/2018</div>
<div class="t" style="left:220.3px;top:483.20px;font-size:13px;line-height:13px;color:#5d6770;font-weight:normal;letter-spacing:-0.2px">Traffic From Specific Brand</div>
<div class="t" style="left:183.75px;top:504px;width:260.75px;height:10.4px;overflow:hidden">
<div class="t" style="left:36.55px;top:3.79px;font-size:11px;line-height:11px;color:#7f8a94;letter-spacing:0.07px;white-space:nowrap">Tracking since 8/10/2018</div></div>
<div class="t" style="left:183.75px;top:514.4px;width:271.75px;height:1.0px;background:#dfe3eb"></div>
<div class="t" style="left:201.7px;top:534.10px;font-size:13px;line-height:13px;color:#1f8497;font-weight:bold;letter-spacing:-0.26px">Manage views</div>
</body></html>
